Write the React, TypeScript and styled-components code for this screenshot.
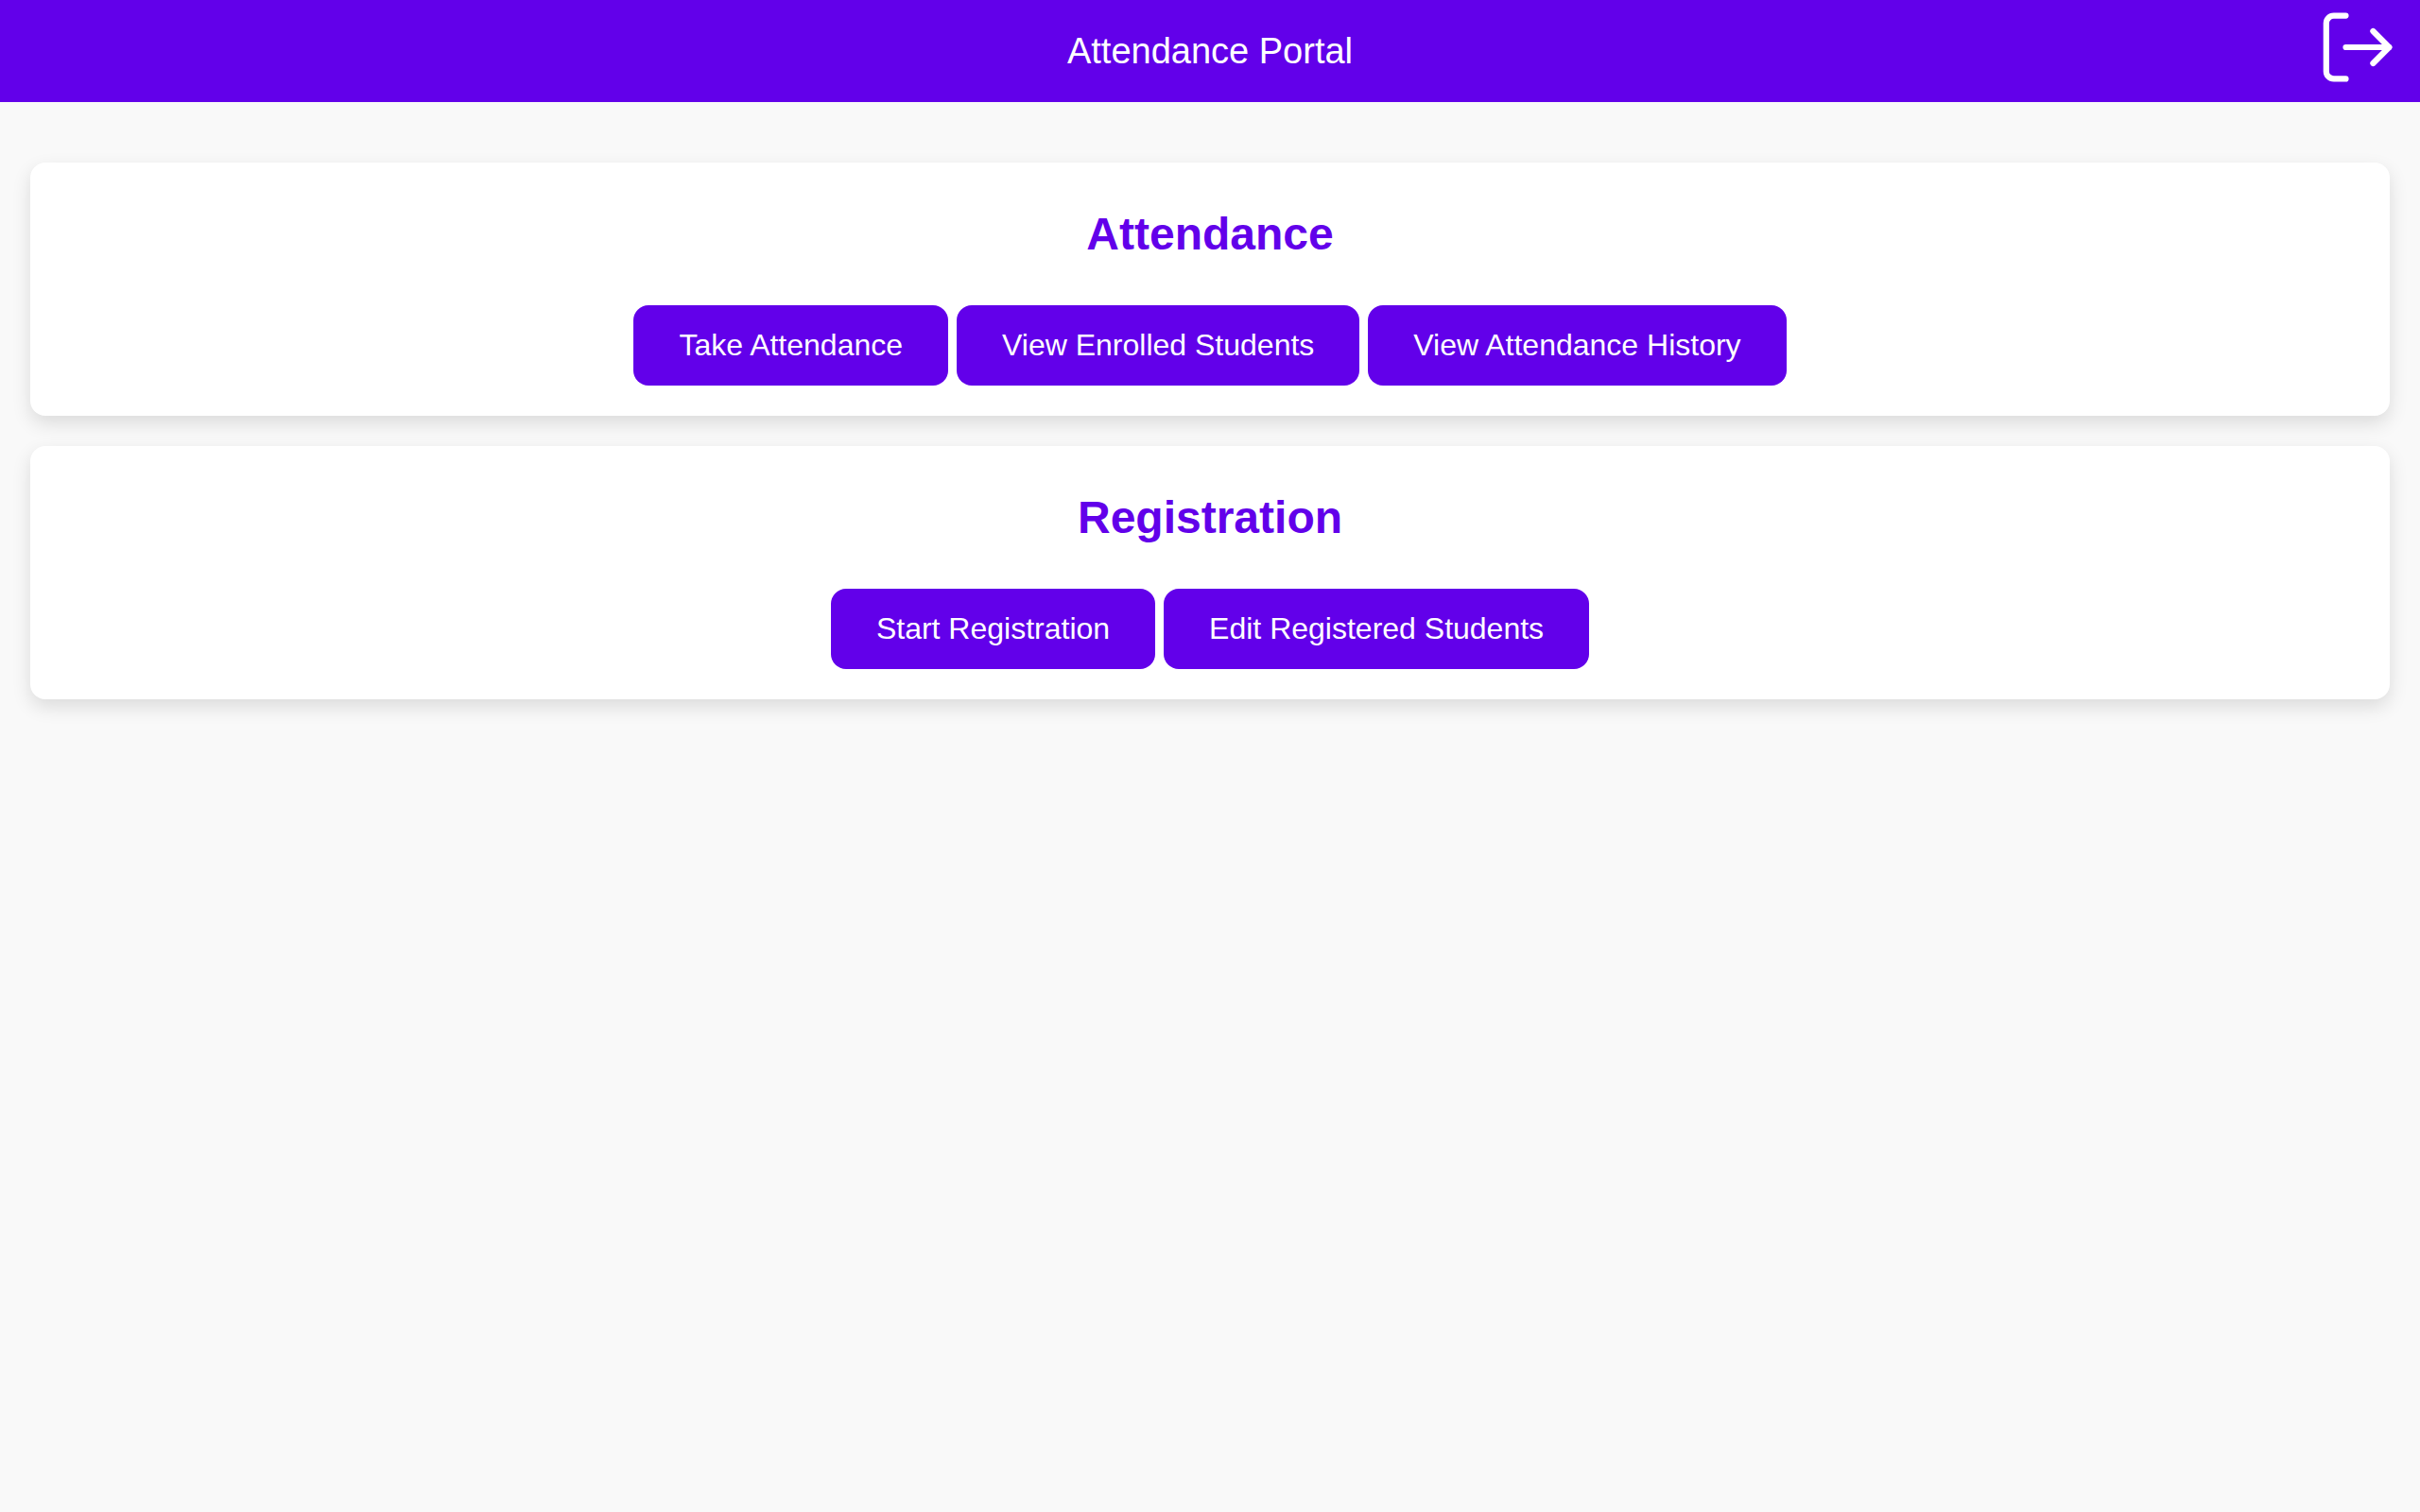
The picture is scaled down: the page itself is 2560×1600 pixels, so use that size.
import React from "react";
import styled, { createGlobalStyle } from "styled-components";

const GlobalStyle = createGlobalStyle`
  *, *::before, *::after { box-sizing: border-box; }
  body {
    margin: 0;
    background: #f9f9f9;
    font-family: "Liberation Sans", Arial, sans-serif;
  }
`;

const Header = styled.header`
  display: grid;
  grid-template-columns: 1fr auto 1fr;
  align-items: start;
  background: #6200ea;
  color: #fff;
`;

const Title = styled.h1`
  grid-column: 2;
  margin: 0;
  padding: 32px 0;
  font-size: 38px;
  font-weight: 400;
  line-height: 44px;
`;

const LogoutButton = styled.button`
  justify-self: end;
  display: flex;
  padding: 10px 26px 0;
  border: 0;
  background: none;
  color: inherit;
  cursor: pointer;
`;

const Main = styled.main`
  display: flex;
  flex-direction: column;
  gap: 32px;
  padding: 64px 32px 32px;
`;

const Card = styled.section`
  padding: 32px;
  border-radius: 16px;
  background: #fff;
  box-shadow: 0 8px 20px rgba(0, 0, 0, 0.12);
  text-align: center;
`;

const CardTitle = styled.h2`
  margin: 0 0 32px;
  color: #6200ea;
  font-size: 48px;
  font-weight: 700;
  line-height: 87px;
`;

const Actions = styled.div`
  display: flex;
  flex-wrap: wrap;
  justify-content: center;
  gap: 9px;
`;

const ActionButton = styled.button`
  padding: 24px 48px;
  border: 0;
  border-radius: 16px;
  background: #6200ea;
  color: #fff;
  font-family: inherit;
  font-size: 32px;
  line-height: 37px;
  cursor: pointer;
`;

const LogoutIcon = () => (
  <svg
    width="80"
    height="80"
    viewBox="0 0 80 80"
    fill="none"
    stroke="currentColor"
    strokeWidth="6.2"
    strokeLinecap="round"
    strokeLinejoin="round"
    aria-hidden="true"
  >
    <path d="M27.5 6.6H14.8a8 8 0 0 0-8 8v50.8a8 8 0 0 0 8 8h12.7" />
    <path d="M27.5 40h45.8" />
    <path d="M56.4 23l16.9 17-16.9 17" />
  </svg>
);

const sections = [
  {
    title: "Attendance",
    actions: ["Take Attendance", "View Enrolled Students", "View Attendance History"],
  },
  {
    title: "Registration",
    actions: ["Start Registration", "Edit Registered Students"],
  },
];

export default function App() {
  return (
    <>
      <GlobalStyle />
      <Header>
        <Title>Attendance Portal</Title>
        <LogoutButton type="button" aria-label="Log out">
          <LogoutIcon />
        </LogoutButton>
      </Header>
      <Main>
        {sections.map(({ title, actions }) => (
          <Card key={title}>
            <CardTitle>{title}</CardTitle>
            <Actions>
              {actions.map((label) => (
                <ActionButton key={label} type="button">
                  {label}
                </ActionButton>
              ))}
            </Actions>
          </Card>
        ))}
      </Main>
    </>
  );
}
